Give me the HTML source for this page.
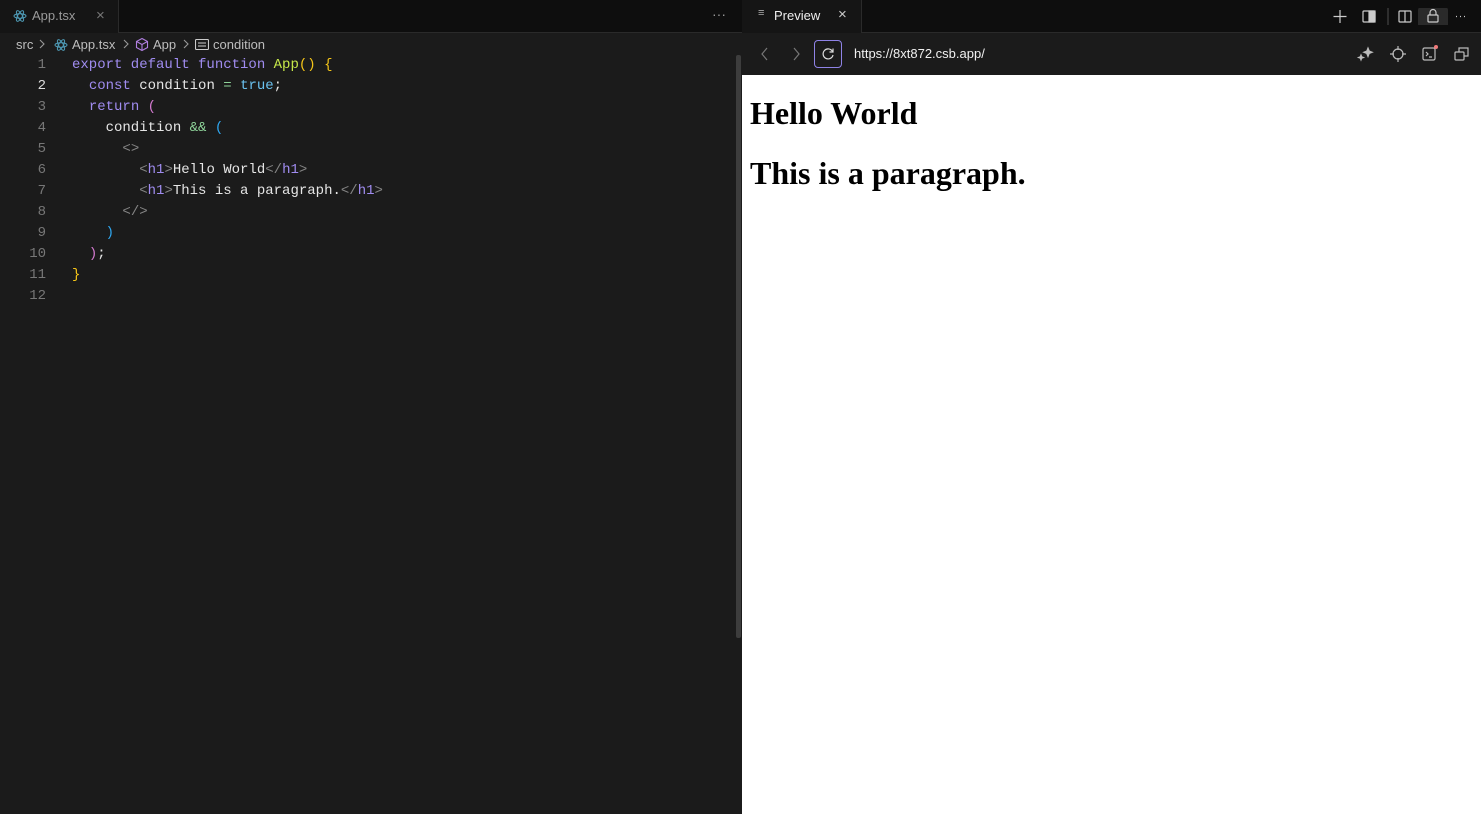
<!DOCTYPE html>
<html><head><meta charset="utf-8"><style>
*{margin:0;padding:0;box-sizing:border-box}
body{width:1481px;height:814px;background:#1b1b1b;font-family:"Liberation Sans",sans-serif;position:relative;overflow:hidden}
.left{position:absolute;left:0;top:0;width:742px;height:814px;background:#1b1b1b}
.tabbar{position:absolute;left:0;top:0;width:742px;height:33px;background:#0e0e0e;border-bottom:1px solid #2a2a2a}
.tab{position:absolute;left:0;top:0;width:119px;height:33px;background:#151515;border-right:1px solid #2a2a2a;color:#9a9a9a;font-size:13px}
.cr{position:absolute;top:37px;font-size:13px;color:#bdbdbd;white-space:nowrap}
.code{position:absolute;left:0;top:55px;font-family:"Liberation Mono",monospace;font-size:14px;line-height:21px;color:#e6e6e6;white-space:pre}
.ln{position:absolute;left:0;width:46px;text-align:right;color:#777}
.tx{position:absolute;left:72px}
.k{color:#a08cf0}.f{color:#c6e84a}.y{color:#f5c518}.b{color:#6ac2f0}.g{color:#8fd49a}.p{color:#d47ad0}.t{color:#858585}.c{color:#2fa7f0}
.right{position:absolute;left:742px;top:0;width:739px;height:814px;background:#fff}
.rtab{position:absolute;left:0;top:0;width:739px;height:33px;background:#0e0e0e;border-bottom:1px solid #2a2a2a}
.rbar{position:absolute;left:0;top:33px;width:739px;height:42px;background:#1b1b1b}
h1{font-family:"Liberation Serif",serif;font-size:32px;font-weight:bold;position:absolute;left:8px;color:#000}
</style></head><body>
<div class="left">
 <div class="tabbar"><div class="tab">
  <svg style="position:absolute;left:13px;top:9px" width="14" height="14" viewBox="0 0 14 14" fill="none" stroke="#4e9ab5" stroke-width="1"><ellipse cx="7" cy="7" rx="6" ry="2.3"/><ellipse cx="7" cy="7" rx="6" ry="2.3" transform="rotate(60 7 7)"/><ellipse cx="7" cy="7" rx="6" ry="2.3" transform="rotate(-60 7 7)"/></svg>
  <span style="position:absolute;left:32px;top:8px">App.tsx</span>
  <span style="position:absolute;left:96px;top:7px;color:#777;font-size:15px">×</span>
 </div>
 <span style="position:absolute;left:712px;top:6px;color:#999;font-size:14px">···</span></div>
 <span class="cr" style="left:16px">src</span>
 <svg class="cr" style="left:38px;top:39px" width="8" height="10" fill="none" stroke="#999" stroke-width="1.1"><path d="M2 1l4 4-4 4"/></svg>
 <svg class="cr" style="left:54px;top:38px" width="14" height="14" viewBox="0 0 14 14" fill="none" stroke="#4e9ab5" stroke-width="1"><ellipse cx="7" cy="7" rx="6" ry="2.3"/><ellipse cx="7" cy="7" rx="6" ry="2.3" transform="rotate(60 7 7)"/><ellipse cx="7" cy="7" rx="6" ry="2.3" transform="rotate(-60 7 7)"/></svg>
 <span class="cr" style="left:72px">App.tsx</span>
 <svg class="cr" style="left:122px;top:39px" width="8" height="10" fill="none" stroke="#999" stroke-width="1.1"><path d="M2 1l4 4-4 4"/></svg>
 <svg class="cr" style="left:135px;top:37px" width="14" height="15" viewBox="0 0 14 14" fill="none" stroke="#b07fe0" stroke-width="1.1"><path d="M7 1L12.5 4v6L7 13 1.5 10V4z M1.5 4L7 7l5.5-3 M7 7v6"/></svg>
 <span class="cr" style="left:153px">App</span>
 <svg class="cr" style="left:182px;top:39px" width="8" height="10" fill="none" stroke="#999" stroke-width="1.1"><path d="M2 1l4 4-4 4"/></svg>
 <svg class="cr" style="left:195px;top:39px" width="14" height="11" viewBox="0 0 14 11" fill="none" stroke="#ccc" stroke-width="1.1"><rect x="0.5" y="0.5" width="13" height="10" rx="1"/><path d="M3 4h8M3 7h8"/></svg>
 <span class="cr" style="left:213px">condition</span>
 <div class="code">
<div class="ln" style="top:0">1</div><div class="ln" style="top:21px;color:#ddd">2</div><div class="ln" style="top:42px">3</div><div class="ln" style="top:63px">4</div><div class="ln" style="top:84px">5</div><div class="ln" style="top:105px">6</div><div class="ln" style="top:126px">7</div><div class="ln" style="top:147px">8</div><div class="ln" style="top:168px">9</div><div class="ln" style="top:189px">10</div><div class="ln" style="top:210px">11</div><div class="ln" style="top:231px">12</div>
<div class="tx" style="top:0"><span class="k">export default function</span> <span class="f">App</span><span class="y">() {</span></div>
<div class="tx" style="top:21px">  <span class="k">const</span> condition <span class="g">=</span> <span class="b">true</span>;</div>
<div class="tx" style="top:42px">  <span class="k">return</span> <span class="p">(</span></div>
<div class="tx" style="top:63px">    condition <span class="g">&amp;&amp;</span> <span class="c">(</span></div>
<div class="tx" style="top:84px">      <span class="t">&lt;&gt;</span></div>
<div class="tx" style="top:105px">        <span class="t">&lt;</span><span class="k">h1</span><span class="t">&gt;</span>Hello World<span class="t">&lt;/</span><span class="k">h1</span><span class="t">&gt;</span></div>
<div class="tx" style="top:126px">        <span class="t">&lt;</span><span class="k">h1</span><span class="t">&gt;</span>This is a paragraph.<span class="t">&lt;/</span><span class="k">h1</span><span class="t">&gt;</span></div>
<div class="tx" style="top:147px">      <span class="t">&lt;/&gt;</span></div>
<div class="tx" style="top:168px">    <span class="c">)</span></div>
<div class="tx" style="top:189px">  <span class="p">)</span>;</div>
<div class="tx" style="top:210px"><span class="y">}</span></div>
 </div>
 <div style="position:absolute;left:736px;top:55px;width:5px;height:583px;background:#3d3d3d;border-radius:2px"></div>
</div>
<div class="right">
 <div class="rtab">
  <div style="position:absolute;left:0;top:0;width:120px;height:33px;background:#151515;border-right:1px solid #2a2a2a;color:#eee;font-size:13px">
   <span style="position:absolute;left:16px;top:7px;color:#aaa;font-size:11px">≡</span>
   <span style="position:absolute;left:32px;top:8px">Preview</span>
   <span style="position:absolute;left:96px;top:6px;color:#ccc;font-size:15px">×</span>
  </div>
  <svg style="position:absolute;left:590px;top:8px" width="150" height="17" viewBox="0 0 150 17" fill="none" stroke="#ccc" stroke-width="1.2">
   <path d="M8 2v13M1.5 8.5h13"/>
   <rect x="31" y="3" width="12" height="11" rx="1"/><rect x="37" y="3" width="6" height="11" fill="#ccc"/>
   <path d="M56 0v17" stroke="#444"/>
   <rect x="67" y="3" width="12" height="11" rx="1"/><path d="M73 3v11"/>
   <rect x="86" y="-1" width="30" height="26" rx="3" fill="#2a2a2a" stroke="none"/>
   <rect x="96" y="7" width="10" height="7" rx="1"/><path d="M98 7V4.5a3 3 0 0 1 6 0V7"/>
   <path d="M124 8.5h1M128 8.5h1M132 8.5h1"/>
  </svg>
 </div>
 <div class="rbar">
  <svg style="position:absolute;left:16px;top:13px" width="50" height="16" fill="none" stroke="#777" stroke-width="1.2"><path d="M9 2L4 8l5 6M36 2l5 6-5 6"/></svg>
  <div style="position:absolute;left:72px;top:7px;width:28px;height:28px;border:1px solid #8f83e6;border-radius:4px"></div>
  <svg style="position:absolute;left:79px;top:14px" width="14" height="14" fill="none" stroke="#ddd" stroke-width="1.2"><path d="M11.5 4.5A5 5 0 1 0 12 8"/><path d="M12 1.5v3.5H8.5"/></svg>
  <span style="position:absolute;left:112px;top:13px;color:#f0f0f0;font-size:13px">https://8xt872.csb.app/</span>
  <svg style="position:absolute;left:614px;top:12px" width="120" height="18" fill="none" stroke="#bbb" stroke-width="1.2">
   <path d="M12 3l1.2 3 3 1.2-3 1.2L12 11.5l-1.2-3-3-1.2 3-1.2z" fill="#bbb"/><path d="M5 10l.7 1.8 1.8.7-1.8.7L5 15l-.7-1.8-1.8-.7 1.8-.7z" fill="#bbb"/>
   <circle cx="42" cy="9" r="5"/><path d="M42 1v4M42 13v4M34 9h4M46 9h4"/>
   <rect x="67" y="3" width="12" height="12" rx="1.5"/><path d="M70 7l2 2-2 2M73 12h3"/><circle cx="80" cy="2" r="2" fill="#f07a7a" stroke="none"/>
   <rect x="99" y="7" width="9" height="8" rx="1"/><path d="M103 7V3h9v8h-4"/>
  </svg>
 </div>
 <h1 style="top:95px">Hello World</h1>
 <h1 style="top:155px">This is a paragraph.</h1>
</div>
</body></html>
